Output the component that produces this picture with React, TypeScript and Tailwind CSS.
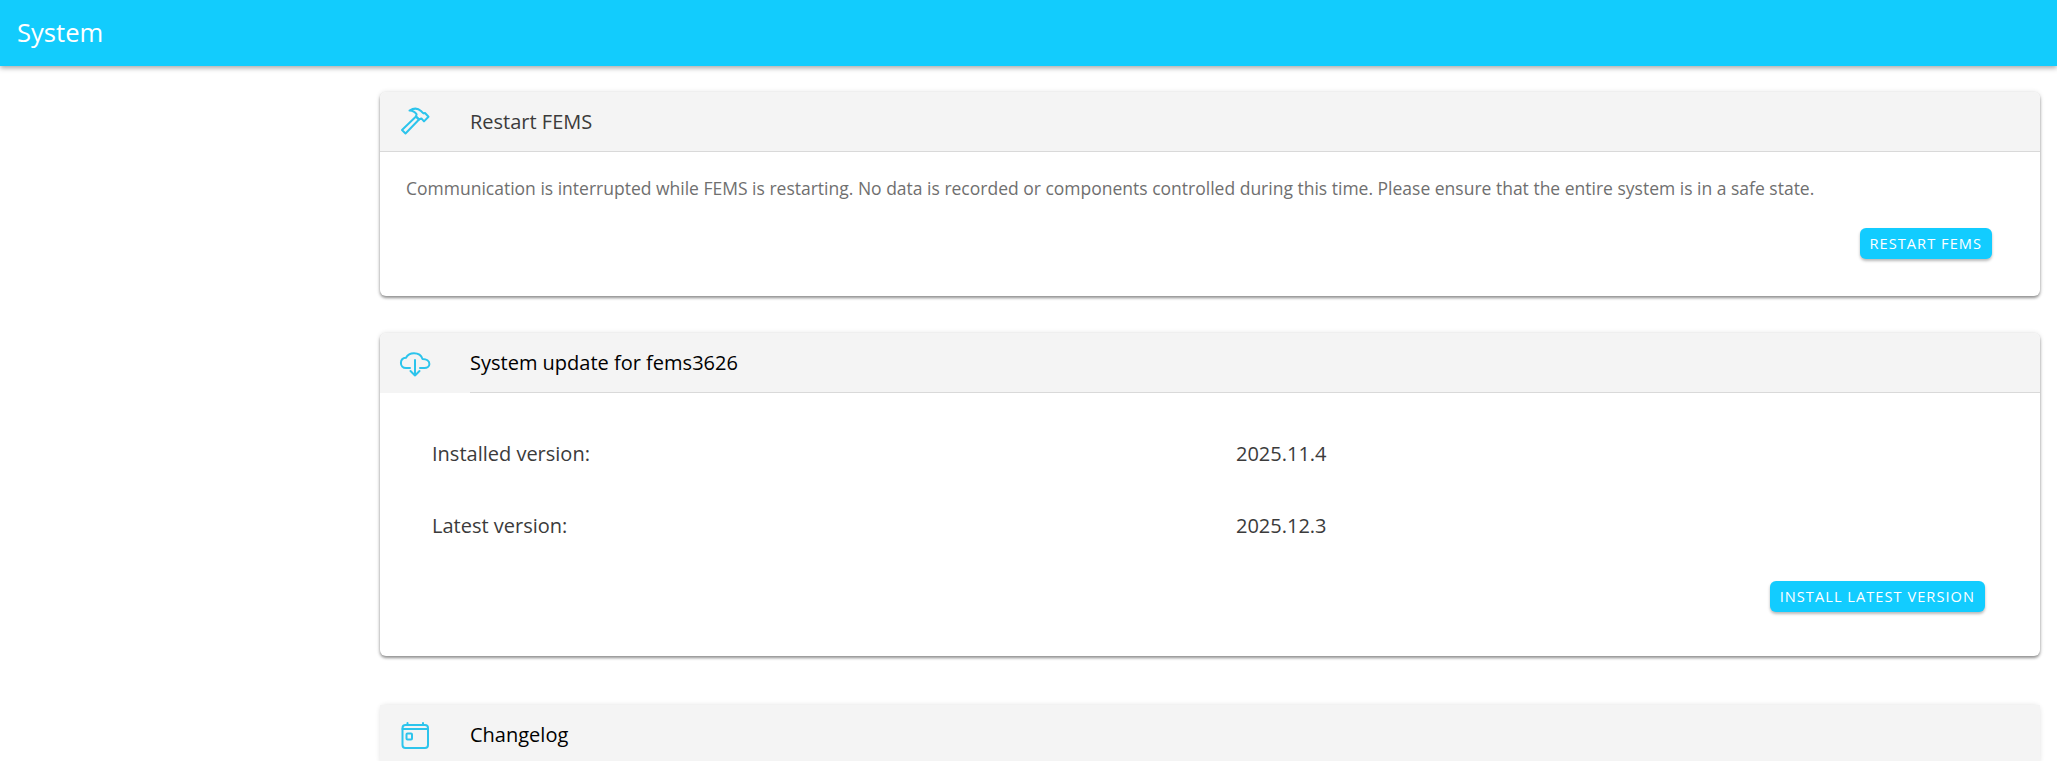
import React from "react";

const FONT = "font-['Open_Sans',sans-serif]";

const HammerIcon = () => (
  <svg viewBox="0 -1 40 40" className="h-[40px] w-[40px]" fill="none" stroke="currentColor" strokeWidth="2" strokeLinejoin="round">
    <path d="M7 27 L10.5 30.5 L24 16.5 L21 13.5 Z" />
    <path d="M14.5 7.5 C19 4.8 23 5.2 26 8 L28.4 10.4 L30 10 L33.5 13.8 L29 18.4 L26.4 15.4 L24 16.5 L21 13.5 L21.6 11.2 C20 8.8 18 7.8 14.5 7.5 Z" />
  </svg>
);

const CloudIcon = () => (
  <svg viewBox="0 -2 40 40" className="h-[40px] w-[40px]" fill="none" stroke="currentColor" strokeWidth="2" strokeLinecap="round" strokeLinejoin="round">
    <path d="M15 23 H11 C7.8 23 5.9 20.6 5.9 18 C5.9 15 8 13 11 12.8 C12.5 10 15.5 8.3 19 8.3 C23.5 8.3 26.5 11 27.5 14 C31.5 14 34.4 16 34.4 19 C34.4 21.5 32 23 29.5 23 H25" />
    <path d="M20 15 V30.5 M15.5 26 L20 30.5 L24.5 26" />
  </svg>
);

const CalendarIcon = () => (
  <svg viewBox="0 0 40 40" className="h-[40px] w-[40px]" fill="none" stroke="currentColor" strokeWidth="2" strokeLinecap="round" strokeLinejoin="round">
    <rect x="7.5" y="10" width="25.5" height="23" rx="3" />
    <path d="M7.5 14 H33 M12.5 8 V10 M28 8 V10" />
    <rect x="11.5" y="18.5" width="5.5" height="6" rx="1" />
  </svg>
);

const CardHeader: React.FC<{ icon: React.ReactNode; title: string; dark?: boolean; fullLine?: boolean }> = ({
  icon,
  title,
  dark,
  fullLine,
}) => (
  <div className={`flex h-[60px] bg-[#f4f4f4] ${fullLine ? "border-b border-[#d9d9d9]" : ""}`}>
    <div className="flex w-[90px] shrink-0 items-center pl-[15px] text-[#2cc4ec]">{icon}</div>
    <div
      className={`flex flex-1 items-center text-[20px] ${fullLine ? "" : "border-b border-[#d9d9d9]"} ${dark ? "text-black" : "text-[#3b3b3b]"}`}
    >
      {title}
    </div>
  </div>
);

const ActionButton: React.FC<{ label: string }> = ({ label }) => (
  <button className="h-[31px] rounded-[6px] bg-[#12ccff] px-[10px] text-[14.6px] tracking-[1.04px] text-white shadow-[0_2px_3px_rgba(0,0,0,0.28)]">
    {label}
  </button>
);

const VersionRow: React.FC<{ label: string; value: string }> = ({ label, value }) => (
  <div className="grid h-[72px] grid-cols-[804px_1fr] items-center text-[20px] text-[#3b3b3b]">
    <span>{label}</span>
    <span>{value}</span>
  </div>
);

export default function App() {
  return (
    <div className={`h-[761px] overflow-hidden bg-white ${FONT}`}>
      <header className="flex h-[66px] items-center bg-[#12ccfd] pl-[17px] text-[25.6px] text-white shadow-[0_2px_5px_rgba(0,0,0,0.35)]">
        System
      </header>

      <main className="flex flex-col pl-[380px] pr-[17px] pt-[26px]">
        <section className="h-[204px] overflow-hidden rounded-[6px] bg-white shadow-[0_2px_3px_rgba(0,0,0,0.4),0_0_5px_rgba(0,0,0,0.12)]">
          <CardHeader icon={<HammerIcon />} title="Restart FEMS" fullLine />
          <div className="px-[26px] pt-[23px] text-[17.5px] leading-[27px] text-[#6f6f6f]">
            Communication is interrupted while FEMS is restarting. No data is recorded or components controlled during
            this time. Please ensure that the entire system is in a safe state.
          </div>
          <div className="flex justify-end pr-[48px] pt-[26px]">
            <ActionButton label="RESTART FEMS" />
          </div>
        </section>

        <section className="mt-[37px] h-[323px] overflow-hidden rounded-[6px] bg-white shadow-[0_2px_3px_rgba(0,0,0,0.4),0_0_5px_rgba(0,0,0,0.12)]">
          <CardHeader icon={<CloudIcon />} title="System update for fems3626" dark />
          <div className="pl-[52px] pt-[25px]">
            <VersionRow label="Installed version:" value="2025.11.4" />
            <VersionRow label="Latest version:" value="2025.12.3" />
          </div>
          <div className="flex justify-end pr-[55px] pt-[19px]">
            <ActionButton label="INSTALL LATEST VERSION" />
          </div>
        </section>

        <section className="mt-[49px] rounded-[6px] bg-white shadow-[0_0_5px_rgba(0,0,0,0.12)]">
          <CardHeader icon={<CalendarIcon />} title="Changelog" dark />
        </section>
      </main>
    </div>
  );
}
